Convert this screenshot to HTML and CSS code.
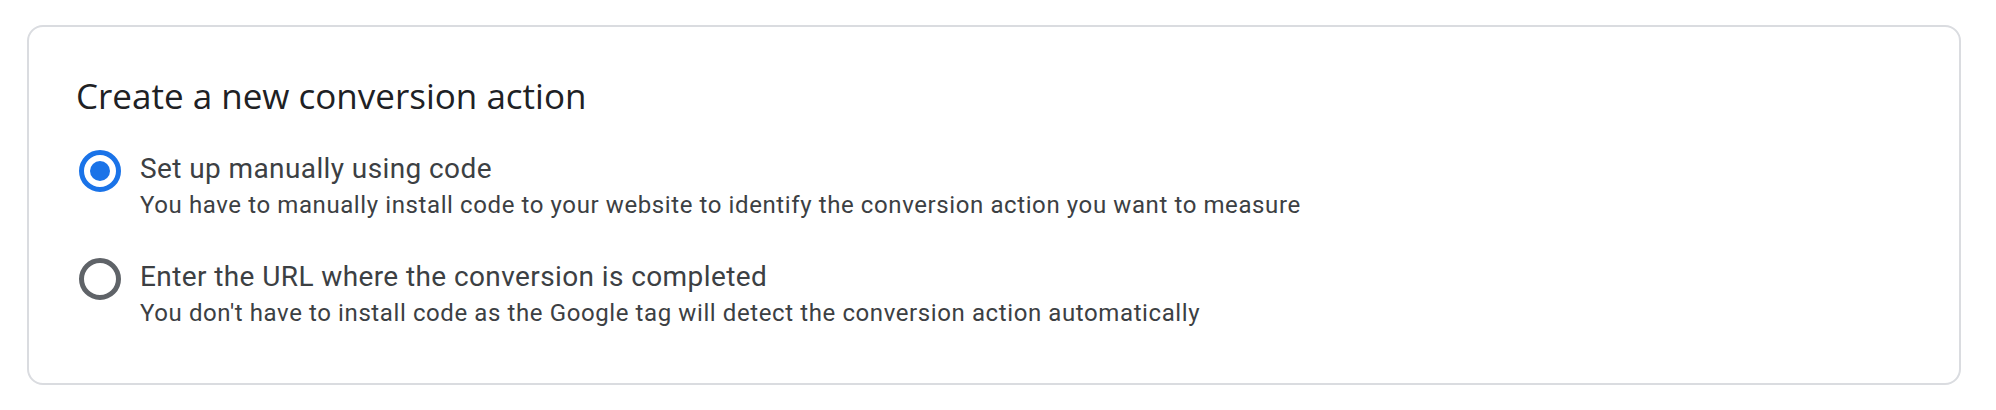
FILE: index.html
```html
<!DOCTYPE html>
<html lang="en">
<head>
<meta charset="utf-8">
<title>Create a new conversion action</title>
<link rel="stylesheet" href="styles.css">
</head>
<body>
  <section class="card">
    <h2 class="card-title">Create a new conversion action</h2>
    <div class="options" role="radiogroup">
      <div class="option" role="radio" aria-checked="true">
        <span class="radio radio-checked"><span class="radio-dot"></span></span>
        <div class="option-text">
          <div class="option-label">Set up manually using code</div>
          <div class="option-desc">You have to manually install code to your website to identify the conversion action you want to measure</div>
        </div>
      </div>
      <div class="option" role="radio" aria-checked="false">
        <span class="radio"></span>
        <div class="option-text">
          <div class="option-label">Enter the URL where the conversion is completed</div>
          <div class="option-desc">You don't have to install code as the Google tag will detect the conversion action automatically</div>
        </div>
      </div>
    </div>
  </section>
</body>
</html>
```

FILE: styles.css
```css
html, body {
  margin: 0;
  padding: 0;
  background: #ffffff;
}

body {
  font-family: Roboto, "Liberation Sans", sans-serif;
  color: #3c4043;
}

.card {
  box-sizing: border-box;
  margin: 25px 35px 0 27px;
  height: 360px;
  border: 2px solid #dadce0;
  border-radius: 16px;
  padding: 47px 47px 0 47px;
}

.card-title {
  margin: 0;
  font-family: "Open Sans", Roboto, sans-serif;
  font-weight: 400;
  font-size: 35px;
  line-height: 44px;
  letter-spacing: 0;
  color: #202124;
}

.options {
  margin-top: 31px;
  display: flex;
  flex-direction: column;
  gap: 36px;
}

.option {
  display: flex;
  align-items: flex-start;
  gap: 19px;
}

.radio {
  box-sizing: border-box;
  flex: 0 0 42px;
  width: 42px;
  height: 42px;
  margin: 1px 0 0 3px;
  border: 5px solid #5f6368;
  border-radius: 50%;
  display: flex;
  align-items: center;
  justify-content: center;
}

.radio-checked {
  border-color: #1a73e8;
}

.radio-dot {
  width: 20px;
  height: 20px;
  border-radius: 50%;
  background: #1a73e8;
}

.option-label {
  font-size: 28px;
  line-height: 40px;
  letter-spacing: 0.4px;
  color: #3c4043;
}

.option-desc {
  font-size: 24px;
  line-height: 32px;
  letter-spacing: 0.6px;
  color: #3c4043;
}
```
